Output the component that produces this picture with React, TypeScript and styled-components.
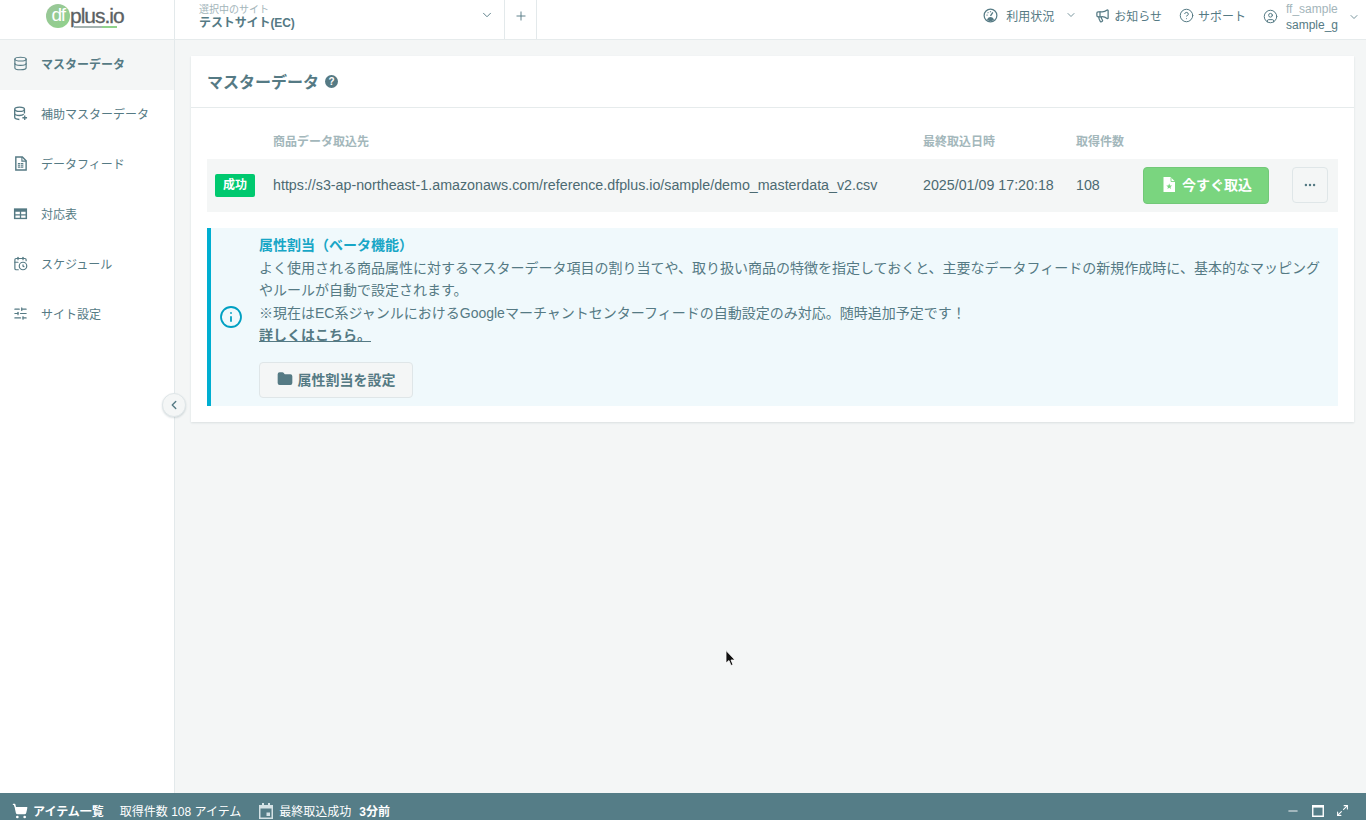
import * as React from "react";
import styled, {createGlobalStyle} from "styled-components";
import {
    Database, CalendarClock, SlidersHorizontal, ChevronDown, ChevronLeft, Plus, Megaphone, CircleHelp, CircleUser,
    Info, Ellipsis, Folder, ShoppingCart, Minus, Maximize2
} from "lucide-react";

const GlobalStyle = createGlobalStyle`
    html, body {
        margin: 0;
        height: 100%;
    }
    body {
        font-family: "Liberation Sans", "Noto Sans CJK JP", sans-serif;
        color: #557a84;
        background: #f4f6f6;
    }
    #root {
        height: 100%;
    }
`;

const Page = styled.div`
    position: relative;
    width: 1366px;
    height: 820px;
    overflow: hidden;
    display: flex;
    flex-direction: column;
`;

const Header = styled.header`
    height: 40px;
    box-sizing: border-box;
    flex-shrink: 0;
    display: flex;
    align-items: stretch;
    background: #fff;
    border-bottom: 1px solid #e6ebec;
`;

const LogoCell = styled.div`
    width: 175px;
    box-sizing: border-box;
    border-right: 1px solid #e3e9eb;
    padding: 2px 0 0 46px;
`;

const LogoMark = styled.div`
    position: relative;
    width: 84px;
    height: 30px;
`;

const LogoCircle = styled.div`
    position: absolute;
    left: 0;
    top: 2px;
    width: 24px;
    height: 24px;
    border-radius: 50%;
    background: linear-gradient(135deg, #9bc59a, #8fd28a);
    color: #fff;
    font-size: 19px;
    line-height: 22px;
    text-align: center;
    letter-spacing: -1.5px;
`;

const LogoText = styled.div`
    position: absolute;
    left: 24px;
    top: 2px;
    color: #5c6163;
    font-size: 21px;
    line-height: 24px;
    letter-spacing: -1px;
    -webkit-text-stroke: 0.3px #5c6163;
`;

const LogoBar = styled.div`
    position: absolute;
    left: 28px;
    top: 24px;
    width: 43px;
    height: 2px;
    background: linear-gradient(90deg, #a5b3b0 0 66%, #8fd28a 66% 100%);
`;

const SiteSelect = styled.div`
    width: 329px;
    box-sizing: border-box;
    padding: 4px 10px 0 24px;
    display: flex;
    justify-content: space-between;
    align-items: flex-start;
`;

const SiteChevron = styled.span`
    display: flex;
    margin-top: 4px;
`;

const SiteLabel = styled.div`
    font-size: 10px;
    line-height: 12px;
    color: #a3b5ba;
`;

const SiteName = styled.div`
    font-size: 12px;
    line-height: 14px;
    font-weight: 700;
    letter-spacing: -0.1px;
    color: #557a84;
`;

const AddSite = styled.div`
    width: 33px;
    box-sizing: border-box;
    padding-bottom: 7px;
    border-left: 1px solid #e3e9eb;
    border-right: 1px solid #e3e9eb;
    display: flex;
    align-items: center;
    justify-content: center;
`;

const HeaderRight = styled.div`
    margin-left: auto;
    display: flex;
    align-items: center;
    padding: 0 6px 0 0;
    font-size: 12px;
`;

const HeaderLink = styled.div<{$gap: number; $after: number}>`
    display: flex;
    align-items: center;
    gap: ${p => p.$gap}px;
    margin-right: ${p => p.$after}px;
    padding-bottom: 9px;
`;

const UserLink = styled.div`
    display: flex;
    align-items: center;
    gap: 8px;
    padding-bottom: 6px;
`;

const UserNames = styled.div`
    line-height: 16px;
    margin-right: 2px;
`;

const UserId = styled.div`
    color: #a3b5ba;
`;

const Body = styled.div`
    flex: 1;
    display: flex;
    min-height: 0;
`;

const Sidebar = styled.nav`
    position: relative;
    width: 175px;
    box-sizing: border-box;
    flex-shrink: 0;
    background: #fff;
    border-right: 1px solid #e3e9eb;
`;

const NavItem = styled.div<{$active?: boolean}>`
    height: 50px;
    box-sizing: border-box;
    padding: 0 0 2.5px 13px;
    display: flex;
    align-items: center;
    gap: 13px;
    font-size: 12px;
    font-weight: ${p => (p.$active ? 700 : 400)};
    background: ${p => (p.$active ? "#f4f6f6" : "#fff")};
`;

const CollapseButton = styled.button`
    position: absolute;
    left: 162px;
    top: 353px;
    width: 24px;
    height: 24px;
    padding: 0;
    border: 1px solid #dfe6e8;
    border-radius: 50%;
    background: #f4f6f6;
    box-shadow: 0 1px 2px rgba(60, 90, 100, 0.2);
    color: #557a84;
    display: flex;
    align-items: center;
    justify-content: center;
`;

const Main = styled.main`
    flex: 1;
    padding: 16px 12px 0 16px;
`;

const Card = styled.section`
    background: #fff;
    box-shadow: 0 1px 2px rgba(60, 90, 100, 0.14);
`;

const CardHeader = styled.div`
    height: 52px;
    box-sizing: border-box;
    padding: 0 16px 2px;
    display: flex;
    align-items: center;
    gap: 6px;
    border-bottom: 1px solid #e6ebec;
`;

const Title = styled.h1`
    margin: 0;
    font-size: 16px;
    font-weight: 700;
    color: #557a84;
`;

const HelpDot = styled.span`
    width: 13px;
    height: 13px;
    margin-top: 1px;
    border-radius: 50%;
    background: #557a84;
    color: #fff;
    font-size: 10px;
    line-height: 13px;
    font-weight: 700;
    text-align: center;
`;

const CardBody = styled.div`
    padding: 16px;
`;

const columns = "66px 650px 153px 67px 126px 1fr";

const TableHead = styled.div`
    display: grid;
    grid-template-columns: ${columns};
    height: 35px;
    box-sizing: border-box;
    padding-bottom: 2px;
    align-items: center;
    font-size: 12px;
    font-weight: 700;
    color: #a3b7bb;
`;

const TableRow = styled.div`
    display: grid;
    grid-template-columns: ${columns};
    height: 53px;
    align-items: center;
    background: #f4f6f6;
    font-size: 14.25px;
    color: #4c6a72;
`;

const RowText = styled.span`
    margin-bottom: 2px;
`;

const SuccessBadge = styled.span`
    justify-self: start;
    margin-left: 8px;
    width: 40px;
    height: 23px;
    border-radius: 2px;
    background: #00c96f;
    color: #fff;
    font-size: 12px;
    font-weight: 700;
    line-height: 22px;
    text-align: center;
`;

const ImportButton = styled.button`
    width: 126px;
    height: 37px;
    padding: 0 0 3px 2px;
    border: 1px solid #72c878;
    border-radius: 4px;
    background: #7ad57f;
    color: #fff;
    font-family: inherit;
    font-size: 14px;
    font-weight: 700;
    display: flex;
    align-items: center;
    justify-content: center;
    gap: 6px;
`;

const MoreButton = styled.button`
    justify-self: end;
    margin: 0 10px 1px 0;
    width: 36px;
    height: 36px;
    padding: 0;
    border: 1px solid #dfe6e8;
    border-radius: 4px;
    background: #f4f6f6;
    color: #557a84;
    display: flex;
    align-items: center;
    justify-content: center;
`;

const Notice = styled.div`
    margin-top: 16px;
    height: 178px;
    box-sizing: border-box;
    display: flex;
    align-items: center;
    background: #f0f9fc;
    border-left: 4px solid #00aed1;
    color: #00a0c2;
`;

const NoticeIcon = styled.div`
    width: 48px;
    display: flex;
    justify-content: center;
    padding-right: 8px;
    box-sizing: border-box;
`;

const NoticeBody = styled.div`
    flex: 1;
    padding: 0 16px 2px 0;
    font-size: 14px;
    line-height: 22.5px;
    color: #557a84;
`;

const NoticeTitle = styled.div`
    font-weight: 700;
    color: #18a6c6;
`;

const MoreLink = styled.a`
    display: block;
    font-weight: 700;
    color: #557a84;
    text-decoration: underline;
`;

const AttrButton = styled.button`
    margin-top: 15px;
    width: 154px;
    height: 36px;
    padding: 0 0 2px;
    border: 1px solid #dfe6e8;
    border-radius: 4px;
    background: #f4f6f6;
    color: #557a84;
    font-family: inherit;
    font-size: 14px;
    font-weight: 700;
    display: flex;
    align-items: center;
    justify-content: center;
    gap: 5px;
`;

const Footer = styled.footer`
    height: 27px;
    flex-shrink: 0;
    box-sizing: border-box;
    padding: 8px 17px 0 12px;
    display: flex;
    align-items: center;
    background: #557d87;
    color: #fff;
    font-size: 12px;
`;

const FooterItem = styled.span<{$bold?: boolean; $after: number}>`
    display: flex;
    align-items: center;
    gap: 5px;
    font-weight: ${p => (p.$bold ? 700 : 400)};
    margin-right: ${p => p.$after}px;
`;

const WindowControls = styled.div`
    margin-left: auto;
    display: flex;
    align-items: center;
    gap: 12px;
`;

const Cursor = styled.svg`
    position: absolute;
    left: 725px;
    top: 650px;
`;

const DatabasePlus = ({size}: {size: number}) => (
    <svg width={size} height={size} viewBox="0 0 16 16" fill="none" stroke="currentColor" strokeWidth="1.4">
        <ellipse cx="7" cy="3.5" rx="5.2" ry="2.3"/>
        <path d="M1.8 3.5v8.6c0 1.3 2.2 2.2 5 2.3M12.2 3.5V8M1.8 7.8c0 1.3 2.3 2.3 5.2 2.3 1.9 0 3.6-.5 4.5-1.2"/>
        <path d="M12.5 10v5M10 12.5h5"/>
    </svg>
);

const SheetIcon = ({size}: {size: number}) => (
    <svg width={size} height={size} viewBox="0 0 16 16">
        <path d="M3 1h7l4 4v10H3z" fill="none" stroke="currentColor" strokeWidth="1.5"/>
        <path d="M9.5 1v4.5H14" fill="none" stroke="currentColor" strokeWidth="1.2"/>
        <path d="M5.2 7.5h5.8v5H5.2z" fill="currentColor"/>
        <path d="M5 9.2h6.2M5 10.9h6.2M8 7.5v5" stroke="#fff" strokeWidth="0.7"/>
    </svg>
);

const GridIcon = ({size}: {size: number}) => (
    <svg width={size} height={size} viewBox="0 0 16 16">
        <path d="M1 2.5h14v11.500H1z" fill="currentColor"/>
        <path d="M2.6 6.2h4.7v2.600H2.6zM8.7 6.2h4.700v2.600H8.700zM2.600 10h4.700v2.600H2.600zM8.700 10h4.700v2.600H8.700z" fill="#fff"/>
    </svg>
);

const GaugeIcon = ({size}: {size: number}) => (
    <svg width={size} height={size} viewBox="0 0 16 16" fill="none" stroke="currentColor" strokeWidth="1.3">
        <circle cx="8" cy="8" r="6.8"/>
        <path d="M8 8.5 10.5 4.6" strokeWidth="1.4"/>
        <path d="M4.3 12.6c.4-1.8 1.9-3 3.7-3s3.3 1.2 3.7 3c-1 .8-2.3 1.3-3.7 1.3s-2.7-.5-3.7-1.3z" fill="currentColor" stroke="none"/>
        <path d="M3.8 7.5h1M8 3.4v1M5 4.700l.7.7"/>
    </svg>
);

const FileStarIcon = () => (
    <svg width="14" height="15" viewBox="0 0 14 15">
        <path d="M1.5 0h7L13 4.500V15H1.500z" fill="currentColor"/>
        <path d="M9 .5v4h4" fill="none" stroke="#7ad57f" strokeWidth="0.9"/>
        <path d="m7.2 6.500.8 2 2.100.1-1.600 1.300.6 2.100-1.900-1.200-1.800 1.200.6-2.100-1.700-1.300 2.100-.1z" fill="#7ad57f"/>
    </svg>
);

const CalendarIcon = () => (
    <svg width="15" height="16" viewBox="0 0 15 16">
        <path d="M3 0h2v2h4V0h2v2h3v14H0V2h3z" fill="#d4e2e5"/>
        <path d="M1.500 5.500h11v9h-11z" fill="#557d87"/>
        <path d="M7.500 9.500h3.500v3.500H7.500z" fill="#d4e2e5"/>
    </svg>
);

const WindowIcon = () => (
    <svg width="12" height="12" viewBox="0 0 12 12">
        <path d="M.75 .75h10.500v10.500H.75z" fill="none" stroke="currentColor" strokeWidth="1.4"/>
        <path d="M0 0h12v2.600H0z" fill="currentColor"/>
    </svg>
);

const navItems = [
    {label: "マスターデータ", icon: <Database size={15} strokeWidth={1.8}/>, active: true},
    {label: "補助マスターデータ", icon: <DatabasePlus size={15}/>},
    {label: "データフィード", icon: <SheetIcon size={15}/>},
    {label: "対応表", icon: <GridIcon size={15}/>},
    {label: "スケジュール", icon: <CalendarClock size={15} strokeWidth={1.9}/>},
    {label: "サイト設定", icon: <SlidersHorizontal size={15} strokeWidth={1.9}/>},
];

export default function App() {
    return (
        <Page>
            <GlobalStyle/>
            <Header>
                <LogoCell>
                    <LogoMark>
                        <LogoCircle>df</LogoCircle>
                        <LogoText>plus.io</LogoText>
                        <LogoBar/>
                    </LogoMark>
                </LogoCell>
                <SiteSelect>
                    <div>
                        <SiteLabel>選択中のサイト</SiteLabel>
                        <SiteName>テストサイト(EC)</SiteName>
                    </div>
                    <SiteChevron><ChevronDown size={14} strokeWidth={1.6}/></SiteChevron>
                </SiteSelect>
                <AddSite><Plus size={14} strokeWidth={1.6}/></AddSite>
                <HeaderRight>
                    <HeaderLink $gap={8} $after={11}><GaugeIcon size={15}/>利用状況</HeaderLink>
                    <HeaderLink $gap={0} $after={18}><ChevronDown size={12} strokeWidth={1.6}/></HeaderLink>
                    <HeaderLink $gap={4} $after={17}><Megaphone size={15} strokeWidth={2}/>お知らせ</HeaderLink>
                    <HeaderLink $gap={4} $after={17}><CircleHelp size={15} strokeWidth={1.6}/>サポート</HeaderLink>
                    <UserLink>
                        <CircleUser size={15} strokeWidth={1.6}/>
                        <UserNames>
                            <UserId>ff_sample</UserId>
                            <div>sample_g</div>
                        </UserNames>
                        <ChevronDown size={12} strokeWidth={1.6}/>
                    </UserLink>
                </HeaderRight>
            </Header>
            <Body>
                <Sidebar>
                    {navItems.map(item => (
                        <NavItem key={item.label} $active={item.active}>
                            {item.icon}
                            {item.label}
                        </NavItem>
                    ))}
                    <CollapseButton><ChevronLeft size={14} strokeWidth={2.4}/></CollapseButton>
                </Sidebar>
                <Main>
                    <Card>
                        <CardHeader>
                            <Title>マスターデータ</Title>
                            <HelpDot>?</HelpDot>
                        </CardHeader>
                        <CardBody>
                            <TableHead>
                                <span/>
                                <span>商品データ取込先</span>
                                <span>最終取込日時</span>
                                <span>取得件数</span>
                            </TableHead>
                            <TableRow>
                                <SuccessBadge>成功</SuccessBadge>
                                <RowText>https://s3-ap-northeast-1.amazonaws.com/reference.dfplus.io/sample/demo_masterdata_v2.csv</RowText>
                                <RowText>2025/01/09 17:20:18</RowText>
                                <RowText>108</RowText>
                                <ImportButton><FileStarIcon/>今すぐ取込</ImportButton>
                                <MoreButton><Ellipsis size={14} strokeWidth={2.2}/></MoreButton>
                            </TableRow>
                            <Notice>
                                <NoticeIcon><Info size={24} strokeWidth={1.8}/></NoticeIcon>
                                <NoticeBody>
                                    <NoticeTitle>属性割当（ベータ機能）</NoticeTitle>
                                    <div>よく使用される商品属性に対するマスターデータ項目の割り当てや、取り扱い商品の特徴を指定しておくと、主要なデータフィードの新規作成時に、基本的なマッピングやルールが自動で設定されます。</div>
                                    <div>※現在はEC系ジャンルにおけるGoogleマーチャントセンターフィードの自動設定のみ対応。随時追加予定です！</div>
                                    <MoreLink>詳しくはこちら。</MoreLink>
                                    <AttrButton><Folder size={16} fill="currentColor"/>属性割当を設定</AttrButton>
                                </NoticeBody>
                            </Notice>
                        </CardBody>
                    </Card>
                </Main>
            </Body>
            <Footer>
                <FooterItem $bold $after={16}><ShoppingCart size={16} fill="currentColor"/>アイテム一覧</FooterItem>
                <FooterItem $after={18}>取得件数 108 アイテム</FooterItem>
                <FooterItem $after={8}><CalendarIcon/>最終取込成功</FooterItem>
                <FooterItem $bold $after={0}>3分前</FooterItem>
                <WindowControls>
                    <Minus size={14} strokeWidth={2.4} opacity={0.6}/>
                    <WindowIcon/>
                    <Maximize2 size={13} strokeWidth={2}/>
                </WindowControls>
            </Footer>
            <Cursor width="12" height="18" viewBox="0 0 12 18">
                <path d="M1 0.5 L1 13 L4 10.5 L6 15.5 L8 14.7 L6 10 L10 10 Z" fill="#111" stroke="#fff" strokeWidth="0.8"/>
            </Cursor>
        </Page>
    );
}
